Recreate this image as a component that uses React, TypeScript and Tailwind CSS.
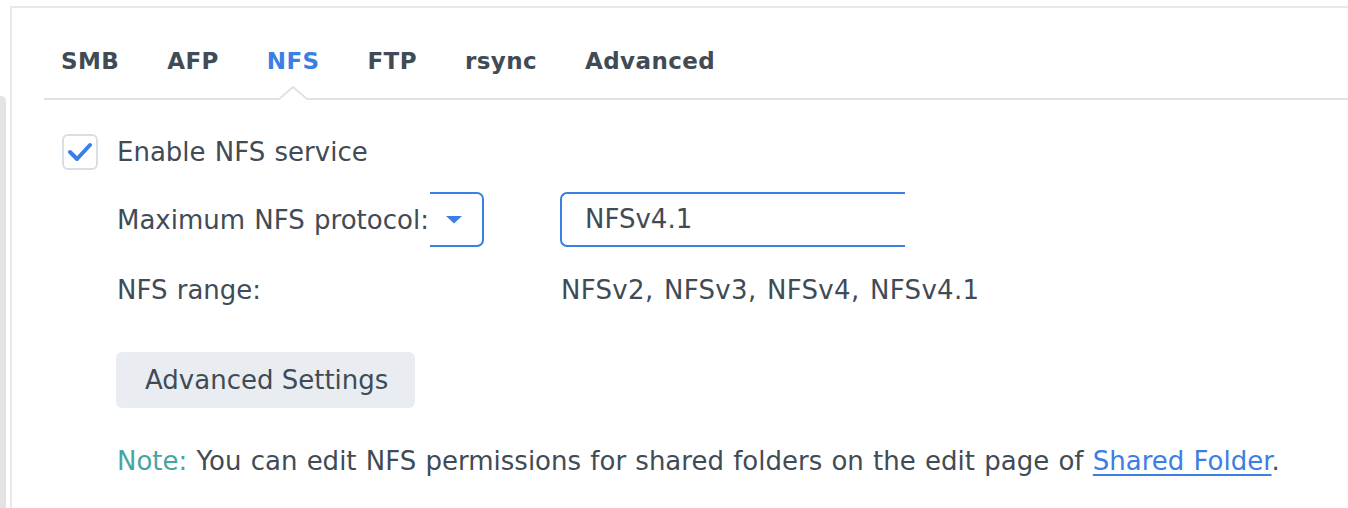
import React from "react";

const tabs = ["SMB", "AFP", "NFS", "FTP", "rsync", "Advanced"];

export default function App() {
  return (
    <div
      className="w-[1348px] h-[508px] bg-white overflow-hidden flex text-[#414b55]"
      style={{ fontFamily: '"DejaVu Sans", Verdana, sans-serif' }}
    >
      {/* left gray strip */}
      <div className="w-[6px] mt-[96px] bg-[#e3e3e3] rounded-tr-[5px] shrink-0" />
      {/* main panel */}
      <div className="ml-[4px] mt-[6px] flex-1 border-l-2 border-t-2 border-[#e6e9ee] pl-[32px]">
        {/* tab bar */}
        <div className="flex gap-[48px] pl-[17px] pt-[38px] pb-[22px] border-b-2 border-[#dfe3e9]">
          {tabs.map((t) => (
            <div
              key={t}
              className={
                "relative text-[23px] leading-[30px] font-bold tracking-[0.4px] " +
                (t === "NFS" ? "text-[#3b7ee4]" : "text-[#414b55]")
              }
            >
              {t}
              {t === "NFS" && (
                <svg
                  className="absolute left-1/2 -translate-x-1/2 bottom-[-24px]"
                  width="28"
                  height="14"
                  viewBox="0 0 28 14"
                >
                  <polygon points="0,14 14,1 28,14" fill="#ffffff" />
                  <polyline
                    points="0,13 14,1 28,13"
                    fill="none"
                    stroke="#dfe3e9"
                    strokeWidth="2"
                  />
                </svg>
              )}
            </div>
          ))}
        </div>

        {/* content */}
        <div className="pl-[18px] flex flex-col text-[26px] [word-spacing:1px]">
          {/* checkbox row */}
          <div className="mt-[34px] h-[36px] flex items-center gap-[19px]">
            <div className="w-[36px] h-[36px] rounded-[6px] border-2 border-[#d8dee6] flex items-center justify-center">
              <svg width="26" height="20" viewBox="0 0 26 20">
                <polyline
                  points="3,10 10,17 23,3"
                  fill="none"
                  stroke="#3b7ee4"
                  strokeWidth="4"
                  strokeLinecap="round"
                  strokeLinejoin="round"
                />
              </svg>
            </div>
            <span className="leading-[36px]">Enable NFS service</span>
          </div>

          {/* protocol row */}
          <div className="mt-[22px] pl-[55px] flex items-center">
            <span className="w-[313px] leading-[36px] whitespace-nowrap">Maximum NFS protocol:</span>
            <div className="w-[54px] h-[55px] border-y-2 border-r-2 border-[#3b7ee4] rounded-r-[7px] flex items-center pl-[16px]">
              <svg width="16" height="8" viewBox="0 0 16 8">
                <polygon points="0,0 16,0 8,7.5" fill="#3b7ee4" />
              </svg>
            </div>
            <div className="ml-[76px] w-[345px] h-[55px] border-y-2 border-l-2 border-[#3b7ee4] rounded-l-[7px] flex items-center pl-[23px]">
              NFSv4.1
            </div>
          </div>

          {/* range row */}
          <div className="mt-[25px] pl-[55px] flex items-center h-[36px]">
            <span className="w-[444px]">NFS range:</span>
            <span className="tracking-[0.3px] [word-spacing:2px]">NFSv2, NFSv3, NFSv4, NFSv4.1</span>
          </div>

          {/* button */}
          <div className="mt-[44px] pl-[54px]">
            <button className="h-[56px] w-[299px] rounded-[6px] bg-[#e9edf1] text-[#414b55] text-[26px] pl-[29px] text-left">
              Advanced Settings
            </button>
          </div>

          {/* note */}
          <div className="mt-[35px] pl-[55px] leading-[36px] whitespace-nowrap">
            <span className="text-[#47a5a1]">Note:</span> You can edit NFS permissions for shared folders on the edit page of{" "}
            <span className="text-[#3b7ee4] underline underline-offset-[4px]">Shared Folder</span>.
          </div>
        </div>
      </div>
    </div>
  );
}
